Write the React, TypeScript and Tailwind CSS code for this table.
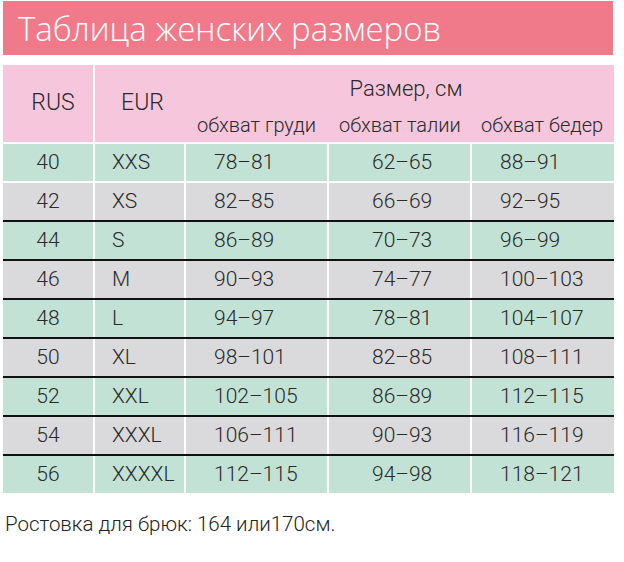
import React from "react";

const rows = [
  ["40", "XXS", "78–81", "62–65", "88–91"],
  ["42", "XS", "82–85", "66–69", "92–95"],
  ["44", "S", "86–89", "70–73", "96–99"],
  ["46", "M", "90–93", "74–77", "100–103"],
  ["48", "L", "94–97", "78–81", "104–107"],
  ["50", "XL", "98–101", "82–85", "108–111"],
  ["52", "XXL", "102–105", "86–89", "112–115"],
  ["54", "XXXL", "106–111", "90–93", "116–119"],
  ["56", "XXXXL", "112–115", "94–98", "118–121"],
];

export default function App() {
  return (
    <div className="w-[624px] h-[562px] bg-white overflow-hidden" style={{ fontFamily: "Roboto, sans-serif" }}>
      <div className="ml-[3px] mt-[1px] w-[610px] h-[54px] bg-[#f07a8a] flex items-center pl-[15px]">
        <span className="text-white text-[33px] font-light leading-none" style={{ fontFamily: "'Open Sans', sans-serif" }}>
          Таблица женских размеров
        </span>
      </div>
      <div className="ml-[3px] mt-[10px] w-[611px]">
        <div className="flex h-[77px] bg-[#f6c7dc] text-[#2a2a2a]">
          <div className="w-[90px] flex items-center justify-center pl-[10px] text-[23px] font-light">RUS</div>
          <div className="w-[91px] border-l-2 border-white flex items-center justify-center pl-[6px] text-[23px] font-light">EUR</div>
          <div className="flex-1 flex flex-col">
            <div className="h-[44px] flex items-center justify-center text-[22px] font-light pl-[14px] pt-[2px]">Размер, см</div>
            <div className="flex-1 flex text-[20px] font-light leading-none pt-[6px]">
              <div className="w-[143px] pl-[13px] whitespace-nowrap">обхват груди</div>
              <div className="w-[143px] pl-[12px] whitespace-nowrap">обхват талии</div>
              <div className="flex-1 pl-[11px] whitespace-nowrap">обхват бедер</div>
            </div>
          </div>
        </div>
        {rows.map((r, i) => (
          <div
            key={i}
            className={`flex h-[39px] border-t-2 text-[21px] text-[#2a2a2a] font-light ${
              i === 0 || i === 1 ? "border-white" : "border-[#111]"
            } ${i % 2 === 0 ? "bg-[#c2e2d5]" : "bg-[#dad9db]"}`}
          >
            <div className="w-[90px] flex items-center justify-center">{r[0]}</div>
            <div className="w-[91px] border-l-2 border-white flex items-center pl-[17px]">{r[1]}</div>
            <div className="w-[143px] border-l-2 border-white flex items-center pl-[28px]">{r[2]}</div>
            <div className="w-[143px] border-l-2 border-white flex items-center pl-[43px]">{r[3]}</div>
            <div className="flex-1 border-l-2 border-white flex items-center pl-[28px]">{r[4]}</div>
          </div>
        ))}
      </div>
      <div className="ml-[5px] mt-[16px] text-[20.5px] text-[#222] font-light">Ростовка для брюк: 164 или170см.</div>
    </div>
  );
}
